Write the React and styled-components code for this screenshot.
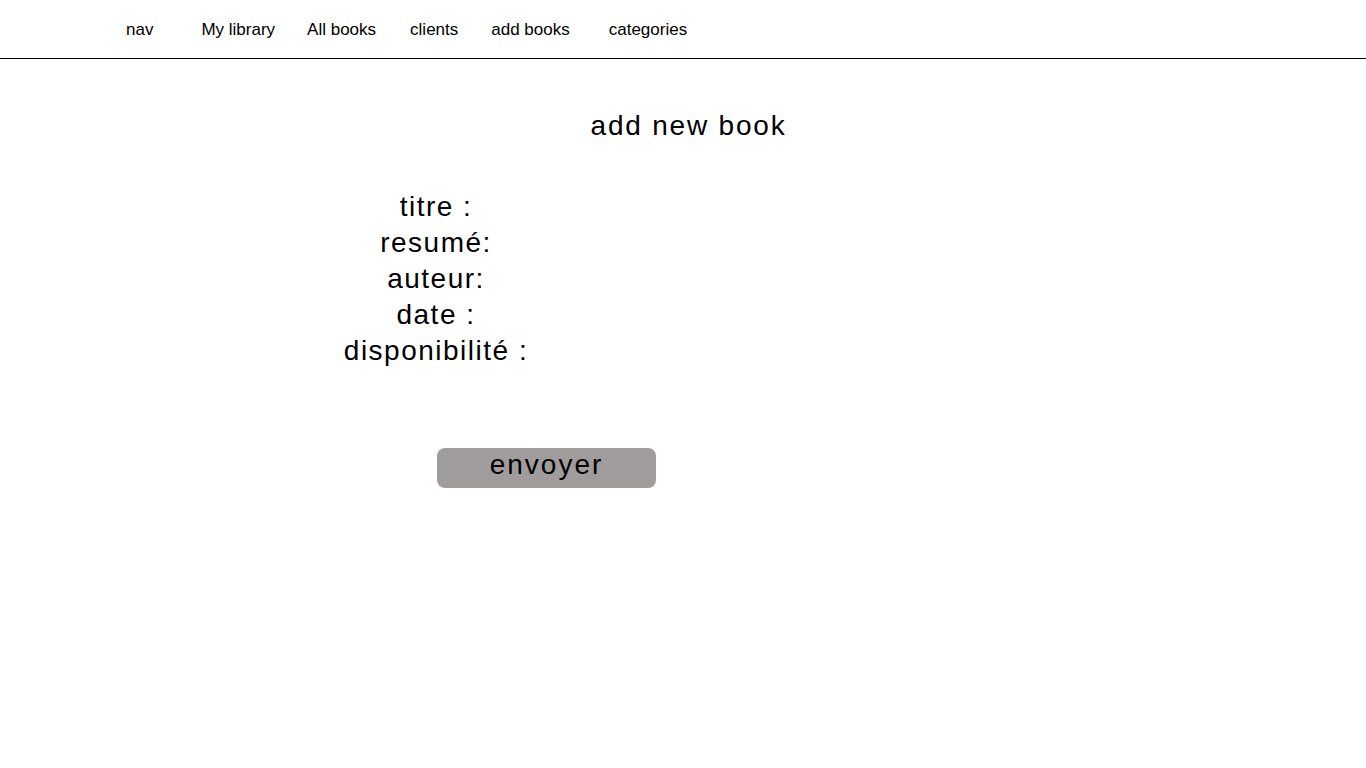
import React from 'react'
import styled, { createGlobalStyle } from 'styled-components'

const GlobalStyle = createGlobalStyle`
	body {
		margin: 0;
		background: #fff;
		color: #000;
		font-family: 'Liberation Sans', Arial, sans-serif;
	}
`

const NavBar = styled.nav`
	display: flex;
	align-items: center;
	box-sizing: border-box;
	height: 59px;
	padding: 2px 0 0 126px;
	border-bottom: 1px solid #000;
`

const NavItem = styled.a`
	margin-left: ${(p) => p.$gap || 0}px;
	font-size: 17px;
	color: #000;
	text-decoration: none;
	cursor: pointer;
`

const Main = styled.main`
	display: flex;
	flex-direction: column;
	padding-top: 51px;
`

const Title = styled.h1`
	margin: 0;
	padding-left: 11px;
	text-align: center;
	font-size: 28px;
	font-weight: normal;
	line-height: 32px;
	letter-spacing: 1.8px;
`

const Fields = styled.div`
	display: flex;
	flex-direction: column;
	width: 300px;
	margin: 47px 0 0 286px;
	text-align: center;
`

const Label = styled.label`
	font-size: 28px;
	line-height: 36px;
	letter-spacing: 1.5px;
`

const SubmitButton = styled.button`
	display: flex;
	justify-content: center;
	align-items: flex-start;
	align-self: flex-start;
	width: 219px;
	height: 40px;
	margin: 79px 0 0 437px;
	padding: 1px 0 0;
	border: none;
	border-radius: 8px;
	background: #a19c9c;
	font-family: inherit;
	font-size: 28px;
	line-height: 32px;
	letter-spacing: 2px;
	color: #000;
	cursor: pointer;
`

const links = [
	{ label: 'nav', gap: 0 },
	{ label: 'My library', gap: 48 },
	{ label: 'All books', gap: 32 },
	{ label: 'clients', gap: 34 },
	{ label: 'add books', gap: 33 },
	{ label: 'categories', gap: 39 },
]

const fields = ['titre :', 'resumé:', 'auteur:', 'date :', 'disponibilité :']

export default function App() {
	return (
		<>
			<GlobalStyle />
			<NavBar>
				{links.map((l) => (
					<NavItem key={l.label} $gap={l.gap}>
						{l.label}
					</NavItem>
				))}
			</NavBar>
			<Main>
				<Title>add new book</Title>
				<Fields>
					{fields.map((f) => (
						<Label key={f}>{f}</Label>
					))}
				</Fields>
				<SubmitButton>envoyer</SubmitButton>
			</Main>
		</>
	)
}
